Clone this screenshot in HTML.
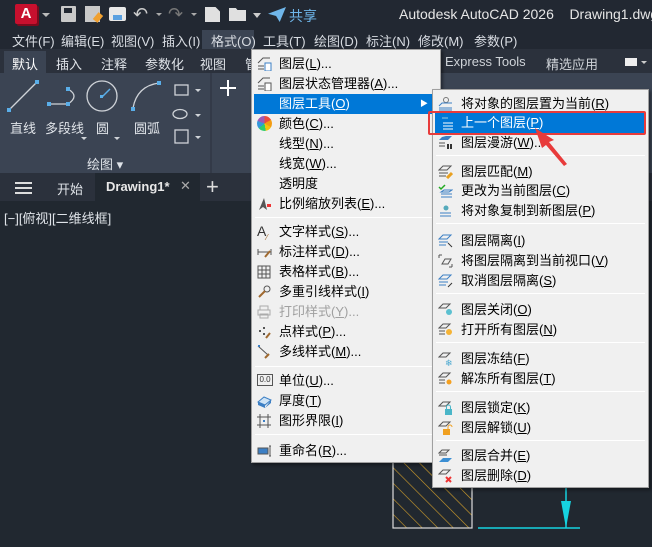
<!DOCTYPE html>
<html><head><meta charset="utf-8">
<style>
*{margin:0;padding:0;box-sizing:border-box}
body{width:652px;height:547px;overflow:hidden;background:#212830;font-family:"Liberation Sans","Noto Sans CJK SC",sans-serif;position:relative;color:#dfe3e8}
.abs{position:absolute}
.t{font-size:13px;white-space:nowrap}
#title{left:0;top:0;width:652px;height:30px;background:#222832}
#menubar{left:0;top:30px;width:652px;height:19px;background:#222832}
#menubar span{position:absolute;top:1px;font-size:13px;color:#d8dce2}
#tabs{left:0;top:49px;width:652px;height:24px;background:#2b313c}
#panel{left:0;top:73px;width:652px;height:100px;background:#3b4453}
#doctabs{left:0;top:173px;width:652px;height:28px;background:#2b313c}
.menu{background:#f0f0f0;border:1px solid #a0a0a0;box-shadow:2px 2px 3px rgba(0,0,0,.4)}
.mi{position:absolute;left:0;right:0;height:20px;font-size:13px;color:#000;line-height:20px;white-space:nowrap}
.mi .tx{position:absolute;left:27px}
.sub .mi .tx{left:28px}
.mi.hl{background:#0078d7;color:#fff}
.sep{position:absolute;left:3px;right:3px;height:1px;background:#bdbdbd;border-bottom:1px solid #fff}
.ic{position:absolute;left:5px;top:3px;width:15px;height:14px}
u{text-decoration:underline}
.dis{color:#a0a0a0}
</style></head><body>
<div id="title" class="abs">
 <div class="abs" style="left:15px;top:4px;width:22px;height:20px;background:#c8102e;border-radius:2px;box-shadow:2px 2px 0 #7d0a1d;color:#fff;font-weight:bold;font-size:15px;text-align:center;line-height:20px">A</div>
 <div class="abs" style="left:42px;top:13px;border:4px solid transparent;border-top:4px solid #bbb"></div>
 <div class="abs" style="left:61px;top:6px;width:15px;height:16px;background:#c9c9c9;border-radius:1px"><div style="margin:2px 3px;width:8px;height:5px;background:#222832"></div></div>
 <div class="abs" style="left:85px;top:6px;width:15px;height:16px;background:#c9c9c9"></div>
 <div class="abs" style="left:95px;top:13px;width:6px;height:9px;background:#f0a030;transform:rotate(40deg)"></div>
 <div class="abs" style="left:109px;top:7px;width:17px;height:14px;background:#e8e8e8;border-radius:2px"><div style="margin:8px 4px 0;width:9px;height:5px;background:#5aa0e0"></div></div>
 <div class="t abs" style="left:133px;top:4px;font-size:18px;color:#ccc">↶</div>
 <div class="abs" style="left:156px;top:13px;border:3px solid transparent;border-top:3px solid #aaa"></div>
 <div class="t abs" style="left:168px;top:4px;font-size:18px;color:#777">↷</div>
 <div class="abs" style="left:191px;top:13px;border:3px solid transparent;border-top:3px solid #aaa"></div>
 <div class="abs" style="left:205px;top:7px;width:15px;height:15px;background:#e0e0e0;clip-path:polygon(0 0,70% 0,100% 30%,100% 100%,0 100%)"></div>
 <div class="abs" style="left:229px;top:8px;width:17px;height:13px;background:#e0e0e0;clip-path:polygon(0 0,40% 0,50% 15%,100% 15%,100% 100%,0 100%)"></div>
 <div class="abs" style="left:253px;top:13px;border:4px solid transparent;border-top:5px solid #ccc"></div>
 <div class="abs" style="left:268px;top:7px;width:18px;height:15px;background:#6fb6ea;clip-path:polygon(0 45%,100% 0,65% 100%,45% 60%)"></div>
 <div class="t abs" style="left:289px;top:6px;font-size:14px;color:#6fb6ea">共享</div>
 <div class="t abs" style="left:399px;top:6px;font-size:14px;color:#e6e6e6">Autodesk AutoCAD 2026&nbsp;&nbsp;&nbsp;&nbsp;Drawing1.dwg</div>
</div>
<div id="menubar" class="abs">
 <span style="left:12px">文件(F)</span><span style="left:61px">编辑(E)</span><span style="left:111px">视图(V)</span><span style="left:162px">插入(I)</span>
 <div class="abs" style="left:202px;top:0;width:52px;height:19px;background:#3b4453"></div>
 <span style="left:211px">格式(O)</span><span style="left:263px">工具(T)</span><span style="left:314px">绘图(D)</span><span style="left:366px">标注(N)</span><span style="left:418px">修改(M)</span><span style="left:474px">参数(P)</span>
</div>
<div id="tabs" class="abs">
 <div class="abs" style="left:4px;top:2px;width:42px;height:22px;background:#3b4453"></div>
 <span class="t abs" style="left:12px;top:5px;color:#fff">默认</span><span class="t abs" style="left:56px;top:5px">插入</span><span class="t abs" style="left:101px;top:5px">注释</span><span class="t abs" style="left:145px;top:5px">参数化</span><span class="t abs" style="left:200px;top:5px">视图</span><span class="t abs" style="left:245px;top:5px">管</span>
 <span class="t abs" style="left:445px;top:5px;color:#cfd3d8">Express Tools</span><span class="t abs" style="left:546px;top:5px;color:#cfd3d8">精选应用</span>
 <div class="abs" style="left:625px;top:9px;width:12px;height:8px;background:#eee"></div>
 <div class="abs" style="left:641px;top:12px;border:3px solid transparent;border-top:3px solid #ccc"></div>
</div>
<div id="panel" class="abs">
 <svg class="abs" style="left:0;top:0" width="652" height="100">
  <g stroke="#cfd3d8" stroke-width="1.3" fill="none">
   <line x1="9" y1="37" x2="37" y2="9"/>
   <path d="M48 31 H68 M68 16 Q80 23 68 31"/>
   <circle cx="102" cy="23" r="15"/>
   <path d="M133 35 Q137 13 159 10"/>
   <rect x="175" y="12" width="13" height="10"/><path d="M173 41 a7 4.5 0 1 0 14 0 a7 4.5 0 1 0 -14 0"/>
   <rect x="175" y="57" width="13" height="13"/>
  </g>
  <g fill="#cfd3d8"><path d="M195 16l3 3 3-3zM195 41l3 3 3-3zM195 63l3 3 3-3zM81 64l3 3 3-3zM114 64l3 3 3-3z"/></g>
  <g fill="#5aaee8"><rect x="7" y="35" width="4" height="4"/><rect x="35" y="7" width="4" height="4"/><rect x="47" y="29" width="4" height="4"/><rect x="66" y="14" width="4" height="4"/><rect x="66" y="29" width="4" height="4"/><rect x="131" y="34" width="4" height="4"/><rect x="157" y="8" width="4" height="4"/><rect x="100" y="22" width="3" height="3"/></g>
  <line x1="102" y1="24" x2="110" y2="16" stroke="#5aaee8" stroke-width="1.5"/>
  <line x1="211" y1="0" x2="211" y2="100" stroke="#2b313c"/>
  <path d="M228 7 v16 M220 15 h16" stroke="#fff" stroke-width="2"/>
 </svg>
 <span class="t abs" style="left:10px;top:45px">直线</span><span class="t abs" style="left:45px;top:45px">多段线</span><span class="t abs" style="left:96px;top:45px">圆</span><span class="t abs" style="left:134px;top:45px">圆弧</span>
 <span class="t abs" style="left:87px;top:81px">绘图 ▾</span>
</div>
<div id="doctabs" class="abs">
 <div class="abs" style="left:15px;top:9px;width:17px;height:2px;background:#ddd;box-shadow:0 5px 0 #ddd,0 10px 0 #ddd"></div>
 <span class="t abs" style="left:57px;top:6px">开始</span>
 <div class="abs" style="left:95px;top:0;width:105px;height:28px;background:#212830"></div>
 <span class="t abs" style="left:106px;top:6px;font-weight:bold;color:#e8e8e8">Drawing1*</span>
 <span class="t abs" style="left:180px;top:5px;color:#aaa">✕</span>
 <span class="abs" style="left:206px;top:1px;font-size:22px;color:#ddd">+</span>
</div>
<span class="t abs" style="left:4px;top:208px;color:#dfe3e8">[−][俯视][二维线框]</span>
<svg class="abs" style="left:380px;top:455px" width="272" height="92">
 <defs><pattern id="h" width="11" height="11" patternUnits="userSpaceOnUse" patternTransform="rotate(-45)"><line x1="0" y1="0" x2="0" y2="11" stroke="#d4a02a" stroke-width="1.2"/></pattern></defs>
 <rect x="13" y="2" width="79" height="71" fill="url(#h)" stroke="#ddd" stroke-width="1.2"/>
 <line x1="98" y1="73" x2="200" y2="73" stroke="#16d3e0" stroke-width="1.5"/>
 <line x1="186" y1="30" x2="186" y2="73" stroke="#16d3e0" stroke-width="1.5"/>
 <polygon points="181,46 191,46 186,73" fill="#16d3e0"/>
</svg>
<div class="menu abs" style="left:251px;top:49px;width:190px;height:414px">
 <div class="mi" style="top:4px"><svg class="ic" viewBox="0 0 15 14"><path d="M1 6l5-5h7M1 9h6M1 12h6" stroke="#555" fill="none"/><rect x="8" y="6" width="6" height="8" fill="#fff" stroke="#3c7fc4"/></svg><span class="tx">图层(<u>L</u>)...</span></div>
 <div class="mi" style="top:24px"><svg class="ic" viewBox="0 0 15 14"><path d="M1 6l5-5h7M1 9h6M1 12h6" stroke="#555" fill="none"/><rect x="8" y="6" width="6" height="8" fill="#fff" stroke="#555"/></svg><span class="tx">图层状态管理器(<u>A</u>)...</span></div>
 <div class="mi hl" style="top:44px;left:2px;right:2px"><span class="tx" style="left:25px">图层工具(<u>O</u>)</span><span style="position:absolute;right:10px;top:0;font-size:8px">▶</span></div>
 <div class="mi" style="top:64px"><div class="ic" style="border-radius:50%;width:15px;height:15px;top:2px;background:conic-gradient(#e84c3d 0 60deg,#f39c12 0 120deg,#f1c40f 0 170deg,#2ecc71 0 230deg,#3498db 0 290deg,#9b59b6 0)"></div><span class="tx">颜色(<u>C</u>)...</span></div>
 <div class="mi" style="top:84px"><span class="tx">线型(<u>N</u>)...</span></div>
 <div class="mi" style="top:104px"><span class="tx">线宽(<u>W</u>)...</span></div>
 <div class="mi" style="top:124px"><span class="tx">透明度</span></div>
 <div class="mi" style="top:144px"><svg class="ic" viewBox="0 0 15 14"><path d="M2 13L7 1l3 12-4-3z" fill="#555"/><rect x="10" y="7" width="4" height="3" fill="#e33"/></svg><span class="tx">比例缩放列表(<u>E</u>)...</span></div>
 <div class="sep" style="top:167px"></div>
 <div class="mi" style="top:172px"><span class="ic" style="font-size:14px;line-height:14px;color:#333;top:2px">A<sub style="font-size:8px;color:#a06a30">⁄</sub></span><span class="tx">文字样式(<u>S</u>)...</span></div>
 <div class="mi" style="top:192px"><svg class="ic" viewBox="0 0 15 14"><path d="M1 4v6M14 4v6M1 7h13" stroke="#555" fill="none"/><path d="M8 12l5-6" stroke="#a06a30" stroke-width="2"/></svg><span class="tx">标注样式(<u>D</u>)...</span></div>
 <div class="mi" style="top:212px"><svg class="ic" viewBox="0 0 15 14"><path d="M1 1h12v12H1zM1 5h12M1 9h12M5 1v12M9 1v12" stroke="#555" fill="none"/></svg><span class="tx">表格样式(<u>B</u>)...</span></div>
 <div class="mi" style="top:232px"><svg class="ic" viewBox="0 0 15 14"><circle cx="10" cy="4" r="3" stroke="#555" fill="none"/><path d="M2 12l6-6" stroke="#a06a30" stroke-width="2"/></svg><span class="tx">多重引线样式(<u>I</u>)</span></div>
 <div class="mi dis" style="top:252px"><svg class="ic" viewBox="0 0 15 14"><path d="M3 1h8v4H3zM1 5h12v5H1zM3 9h8v4H3z" stroke="#aaa" fill="none"/></svg><span class="tx">打印样式(<u>Y</u>)...</span></div>
 <div class="mi" style="top:272px"><svg class="ic" viewBox="0 0 15 14"><g fill="#555"><rect x="2" y="5" width="2" height="2"/><rect x="6" y="2" width="2" height="2"/><rect x="6" y="8" width="2" height="2"/></g><path d="M9 13l4-5" stroke="#a06a30" stroke-width="2"/></svg><span class="tx">点样式(<u>P</u>)...</span></div>
 <div class="mi" style="top:292px"><svg class="ic" viewBox="0 0 15 14"><path d="M1 1l10 9" stroke="#555"/><rect x="1" y="0" width="2" height="2" fill="#3c7fc4"/><path d="M8 13l4-4" stroke="#a06a30" stroke-width="2"/></svg><span class="tx">多线样式(<u>M</u>)...</span></div>
 <div class="sep" style="top:316px"></div>
 <div class="mi" style="top:321px"><span class="ic" style="border:1px solid #555;font-size:8px;line-height:10px;height:12px;width:16px;text-align:center;color:#333">0.0</span><span class="tx">单位(<u>U</u>)...</span></div>
 <div class="mi" style="top:341px"><svg class="ic" viewBox="0 0 15 14"><path d="M1 8l6-5 7 3-6 5z" fill="#cfe4f6" stroke="#3c7fc4"/><path d="M1 8v3l7 3v-3M8 14l6-5v-3" fill="#3c7fc4"/></svg><span class="tx">厚度(<u>T</u>)</span></div>
 <div class="mi" style="top:361px"><svg class="ic" viewBox="0 0 15 14"><path d="M3 0v14M11 0v14M0 3h14M0 11h14" stroke="#555" fill="none"/><g fill="#3c7fc4"><rect x="6" y="6" width="2" height="2"/></g></svg><span class="tx">图形界限(<u>I</u>)</span></div>
 <div class="sep" style="top:384px"></div>
 <div class="mi" style="top:391px"><svg class="ic" viewBox="0 0 15 14"><rect x="1" y="4" width="10" height="6" fill="#3c7fc4" stroke="#555"/><path d="M13 2v10M12 2h2M12 12h2" stroke="#555"/></svg><span class="tx">重命名(<u>R</u>)...</span></div>
</div>
<div class="menu sub abs" style="left:432px;top:89px;width:217px;height:399px">
 <div class="mi" style="top:4px"><svg class="ic" viewBox="0 0 15 14"><circle cx="8" cy="3" r="2.5" stroke="#777" fill="none"/><path d="M1 9l3-3h10M1 11h13M1 13h13" stroke="#3c7fc4" fill="none"/></svg><span class="tx">将对象的图层置为当前(<u>R</u>)</span></div>
 <div class="mi hl" style="top:23px;left:2px;right:2px"><svg class="ic" viewBox="0 0 15 14"><path d="M3 7h10M3 10h10M3 13h10" stroke="#fff"/><path d="M2 2h6" stroke="#9cd"/></svg><span class="tx" style="left:26px">上一个图层(<u>P</u>)</span></div>
 <div class="mi" style="top:43px"><svg class="ic" viewBox="0 0 15 14"><path d="M4 1l4-1h6l-4 4H1z" fill="#3c7fc4"/><path d="M1 7h6M1 10h6" stroke="#555"/><path d="M10 8v5M13 8v5" stroke="#333" stroke-width="2"/></svg><span class="tx">图层漫游(<u>W</u>)...</span></div>
 <div class="sep" style="top:65px"></div>
 <div class="mi" style="top:72px"><svg class="ic" viewBox="0 0 15 14"><path d="M1 5l4-4h8l-4 4zM1 8h9M1 11h7" stroke="#555" fill="none"/><path d="M9 13l5-5" stroke="#e8a020" stroke-width="3"/></svg><span class="tx">图层匹配(<u>M</u>)</span></div>
 <div class="mi" style="top:91px"><svg class="ic" viewBox="0 0 15 14"><path d="M1 3l2 2 4-4" stroke="#2a2" fill="none" stroke-width="1.5"/><path d="M3 8l3-2h8l-3 2zM3 10h11M3 13h11" stroke="#3c7fc4" fill="none"/></svg><span class="tx">更改为当前图层(<u>C</u>)</span></div>
 <div class="mi" style="top:111px"><svg class="ic" viewBox="0 0 15 14"><circle cx="8" cy="4" r="2.5" fill="#5ab"/><path d="M2 9h11M2 12h11" stroke="#3c7fc4"/></svg><span class="tx">将对象复制到新图层(<u>P</u>)</span></div>
 <div class="sep" style="top:133px"></div>
 <div class="mi" style="top:141px"><svg class="ic" viewBox="0 0 15 14"><path d="M1 5l4-4h8l-4 4zM1 8h9M1 11h7" stroke="#3c7fc4" fill="none"/><path d="M10 9l4 4" stroke="#333"/></svg><span class="tx">图层隔离(<u>I</u>)</span></div>
 <div class="mi" style="top:161px"><svg class="ic" viewBox="0 0 15 14"><path d="M1 1h3M1 1v3M14 13h-3M14 13v-3M4 10l3-5h6l-3 5z" stroke="#555" fill="none"/></svg><span class="tx">将图层隔离到当前视口(<u>V</u>)</span></div>
 <div class="mi" style="top:181px"><svg class="ic" viewBox="0 0 15 14"><path d="M1 5l4-4h8l-4 4zM1 8h9M1 11h7" stroke="#3c7fc4" fill="none"/><path d="M10 13l4-4" stroke="#333"/></svg><span class="tx">取消图层隔离(<u>S</u>)</span></div>
 <div class="sep" style="top:203px"></div>
 <div class="mi" style="top:210px"><svg class="ic" viewBox="0 0 15 14"><path d="M1 5l4-4h7l-4 4z" stroke="#555" fill="none"/><circle cx="11" cy="9" r="3" fill="#5bc0d0"/></svg><span class="tx">图层关闭(<u>O</u>)</span></div>
 <div class="mi" style="top:230px"><svg class="ic" viewBox="0 0 15 14"><path d="M1 5l4-4h7l-4 4zM1 8h6M1 11h6" stroke="#555" fill="none"/><circle cx="11" cy="9" r="3" fill="#f5b335"/></svg><span class="tx">打开所有图层(<u>N</u>)</span></div>
 <div class="sep" style="top:252px"></div>
 <div class="mi" style="top:259px"><svg class="ic" viewBox="0 0 15 14"><path d="M1 5l4-4h7l-4 4z" stroke="#555" fill="none"/><text x="7" y="14" font-size="9" fill="#4aa8d0">❄</text></svg><span class="tx">图层冻结(<u>F</u>)</span></div>
 <div class="mi" style="top:279px"><svg class="ic" viewBox="0 0 15 14"><path d="M1 5l4-4h7l-4 4zM1 8h6M1 11h6" stroke="#555" fill="none"/><circle cx="11" cy="10" r="2.5" fill="#f5a020"/></svg><span class="tx">解冻所有图层(<u>T</u>)</span></div>
 <div class="sep" style="top:301px"></div>
 <div class="mi" style="top:308px"><svg class="ic" viewBox="0 0 15 14"><path d="M1 5l4-4h7l-4 4z" stroke="#555" fill="none"/><rect x="7" y="8" width="7" height="6" fill="#4ab6c8"/><path d="M8.5 8V6a2 2 0 0 1 4 0v2" stroke="#4ab6c8" fill="none"/></svg><span class="tx">图层锁定(<u>K</u>)</span></div>
 <div class="mi" style="top:328px"><svg class="ic" viewBox="0 0 15 14"><path d="M1 5l4-4h7l-4 4z" stroke="#555" fill="none"/><rect x="5" y="8" width="7" height="6" fill="#f0a020"/><path d="M10 8V6a2 2 0 0 1 4 0" stroke="#f0a020" fill="none"/></svg><span class="tx">图层解锁(<u>U</u>)</span></div>
 <div class="sep" style="top:350px"></div>
 <div class="mi" style="top:356px"><svg class="ic" viewBox="0 0 15 14"><path d="M1 4l3-3h7l-3 3zM1 6h8" stroke="#555" fill="none"/><path d="M1 13l4-4h9l-4 4z" fill="#3c8fd4"/></svg><span class="tx">图层合并(<u>E</u>)</span></div>
 <div class="mi" style="top:376px"><svg class="ic" viewBox="0 0 15 14"><path d="M1 5l4-4h7l-4 4z" stroke="#555" fill="none"/><path d="M8 8l5 5M13 8l-5 5" stroke="#e33" stroke-width="2"/></svg><span class="tx">图层删除(<u>D</u>)</span></div>
</div>
<div class="abs" style="left:428px;top:111px;width:218px;height:24px;border:2px solid #e83b3b;border-radius:2px"></div>
<svg class="abs" style="left:520px;top:120px" width="60" height="50"><polygon points="15,8 34,20 29,22 47,44 44,46 26,25 22,28" fill="#e83b3b"/></svg>
</body></html>
